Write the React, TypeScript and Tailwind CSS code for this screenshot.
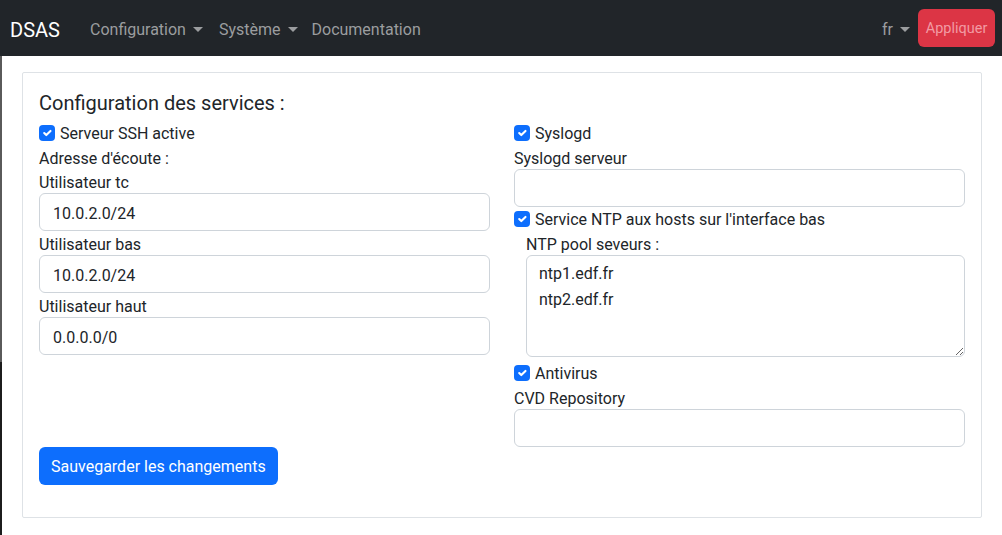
import React from "react";

const font = { fontFamily: "Roboto, 'Liberation Sans', sans-serif" };

function Caret() {
  return (
    <span className="ml-[7px] inline-block h-0 w-0 border-x-[5px] border-t-[5px] border-x-transparent border-t-current align-[3px]" />
  );
}

function Check({ label }: { label: string }) {
  return (
    <label className="flex h-6 items-center">
      <span className="mr-[5px] flex h-4 w-4 items-center justify-center rounded-[4px] bg-[#0d6efd]">
        <svg viewBox="0 0 20 20" className="h-[14px] w-[14px]">
          <path d="M6 10l3 3l6-6" fill="none" stroke="#fff" strokeWidth="3" strokeLinecap="round" strokeLinejoin="round" />
        </svg>
      </span>
      <span className="pt-[2px]">{label}</span>
    </label>
  );
}

function Field({ label, value }: { label: string; value?: string }) {
  return (
    <div>
      <div className="h-6 pt-[2px] leading-6">{label}</div>
      <input
        defaultValue={value}
        className="h-[38px] w-full rounded-[6px] border border-[#ced4da] bg-white px-[13px] pt-[2px] text-[#212529] outline-none"
      />
    </div>
  );
}

function App() {
  return (
    <div className="min-h-[535px] bg-white text-[16px] text-[#212529]" style={font}>
      <nav className="flex h-14 items-center bg-[#212529] pl-[10px] pr-[7px]">
        <span className="w-[72px] pt-[3px] text-[20px] text-white">DSAS</span>
        <div className="flex items-center pt-[3px] text-[#9b9d9f]">
          <span className="px-2">Configuration<Caret /></span>
          <span className="px-2">Système<Caret /></span>
          <span className="pl-[6px] pr-2">Documentation</span>
        </div>
        <div className="ml-auto flex items-center">
          <span className="px-2 pt-[3px] text-[#9b9d9f]">fr<Caret /></span>
          <button className="h-[38px] w-[77px] rounded-[6px] bg-[#dc3545] px-0 pt-[1px] text-[14.5px] text-[#f29aa3]">Appliquer</button>
        </div>
      </nav>

      <div className="flex">
        <div className="flex w-[2px] flex-col">
          <div className="h-[306px] bg-[#5a5a5a]" />
          <div className="flex-1 bg-[#1c1c1c]" />
        </div>
        <main className="flex-1 pb-[18px] pl-[20px] pr-[20px] pt-4">
          <div className="rounded-[2px] border border-[#dee2e6] p-4">
            <h5 className="mb-2 h-6 pt-[2px] text-[20px] leading-6">Configuration des services :</h5>
            <div className="grid grid-cols-2 gap-x-6 leading-6">
              <div>
                <Check label="Serveur SSH active" />
                <div className="h-6 pt-[2px]">Adresse d'écoute :</div>
                <Field label="Utilisateur tc" value="10.0.2.0/24" />
                <Field label="Utilisateur bas" value="10.0.2.0/24" />
                <Field label="Utilisateur haut" value="0.0.0.0/0" />
              </div>
              <div>
                <Check label="Syslogd" />
                <Field label="Syslogd serveur" />
                <Check label="Service NTP aux hosts sur l'interface bas" />
                <div className="pl-3">
                  <div className="h-6 pt-[2px]">NTP pool seveurs :</div>
                  <textarea
                    defaultValue={"ntp1.edf.fr\nntp2.edf.fr"}
                    className="block h-[102px] w-full rounded-[6px] border border-[#ced4da] px-[12px] py-[5px] leading-[26px] outline-none"
                  />
                </div>
                <div className="pt-1">
                  <Check label="Antivirus" />
                </div>
                <Field label="CVD Repository" />
              </div>
            </div>
            <button className="mb-4 h-[38px] rounded-[6px] bg-[#0d6efd] px-3 pt-[1px] text-white">
              Sauvegarder les changements
            </button>
          </div>
        </main>
      </div>
    </div>
  );
}

export default App;
